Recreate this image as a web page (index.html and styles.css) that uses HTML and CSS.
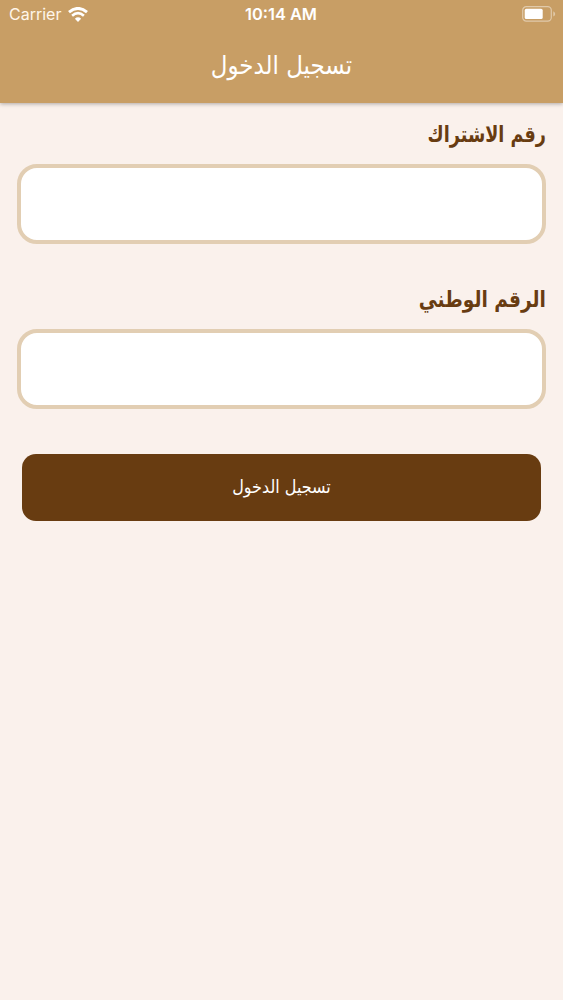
FILE: index.html
```html
<!DOCTYPE html>
<html lang="ar" dir="rtl">
<head>
    <meta charset="UTF-8">
    <meta name="viewport" content="width=device-width, initial-scale=1.0">
    <title>تسجيل الدخول</title>
    <link rel="stylesheet" href="styles.css">
</head>
<body>
    <header class="header">
        <div class="status-bar" dir="ltr">
            <div class="carrier">
                <span>Carrier</span>
                <svg class="wifi" viewBox="0 0 20 15" width="20" height="15">
                    <path d="M1 5.2 Q10 -2.4 19 5.2" fill="none" stroke="#fff" stroke-width="2.9"/>
                    <path d="M4.1 8.7 Q10 3.7 15.9 8.7" fill="none" stroke="#fff" stroke-width="2.7"/>
                    <path d="M6.9 11.7 Q10 9 13.1 11.7 L10 15 Z" fill="#fff"/>
                </svg>
            </div>
            <div class="time">10:14 AM</div>
            <div class="battery">
                <svg viewBox="0 0 34 16" width="34" height="16">
                    <rect x="0.7" y="0.7" width="28.6" height="14.4" rx="3.6" fill="none" stroke="#fff" stroke-opacity="0.45" stroke-width="1.2"/>
                    <rect x="2.7" y="2.8" width="18" height="10.3" rx="1.6" fill="#fff"/>
                    <path d="M31.3 5.3 Q33.2 6.2 33.2 8 Q33.2 9.8 31.3 10.6 Z" fill="#fff" fill-opacity="0.45"/>
                </svg>
            </div>
        </div>
        <h1>تسجيل الدخول</h1>
    </header>

    <form class="login-form">
        <div class="form-group">
            <label class="label-subscription" for="subscription">رقم الاشتراك</label>
            <input type="text" id="subscription">
        </div>
        <div class="form-group">
            <label class="label-national" for="national-id">الرقم الوطني</label>
            <input type="text" id="national-id">
        </div>
        <button type="button">تسجيل الدخول</button>
    </form>
</body>
</html>
```
FILE: styles.css
```css
* {
    box-sizing: border-box;
}

body {
    font-family: "DejaVu Sans Condensed", "DejaVu Sans", sans-serif;
    font-stretch: condensed;
    background-color: #faf1ec;
    color: #683c11;
    min-height: 100vh;
    margin: 0;
}

.header {
    height: 103px;
    background-color: #c89e65;
    color: #fff;
    box-shadow: 0 1px 4px rgba(0, 0, 0, 0.3);
}

.status-bar {
    display: grid;
    grid-template-columns: 1fr auto 1fr;
    align-items: center;
    height: 29px;
    padding: 0 7px 0 9px;
    font-family: Inter, sans-serif;
    font-stretch: normal;
    font-size: 16px;
    line-height: 27px;
}

.carrier {
    display: flex;
    align-items: center;
    gap: 7px;
    color: #fff6ea;
}

.wifi {
    margin-top: -1px;
}

.time {
    margin-right: 3px;
    font-size: 16.4px;
    font-weight: 600;
}

.battery {
    display: flex;
    justify-content: flex-end;
    margin-top: -2px;
}

h1 {
    margin: 0;
    height: 72px;
    font-size: 25.5px;
    font-weight: normal;
    line-height: 72px;
    text-align: center;
}

.login-form {
    padding: 13px 17px 0;
}

.form-group {
    margin-bottom: 37px;
}

label {
    display: block;
    height: 48px;
    font-size: 22.5px;
    font-weight: bold;
    line-height: 37px;
    transform-origin: right;
}

.label-subscription {
    transform: scaleX(0.87);
}

.label-national {
    transform: scaleX(0.92);
}

input[type="text"] {
    display: block;
    width: 100%;
    height: 80px;
    padding: 10px 20px;
    font-size: 22px;
    border: 4px solid #e2ceb3;
    border-radius: 20px;
    background-color: #fff;
}

button {
    display: block;
    width: 519px;
    height: 67px;
    margin: 45px auto 0;
    padding: 0 0 2px;
    font-family: inherit;
    font-stretch: inherit;
    font-size: 17.8px;
    border: none;
    border-radius: 14px;
    background-color: #683c11;
    color: #fff;
    cursor: pointer;
}
```
